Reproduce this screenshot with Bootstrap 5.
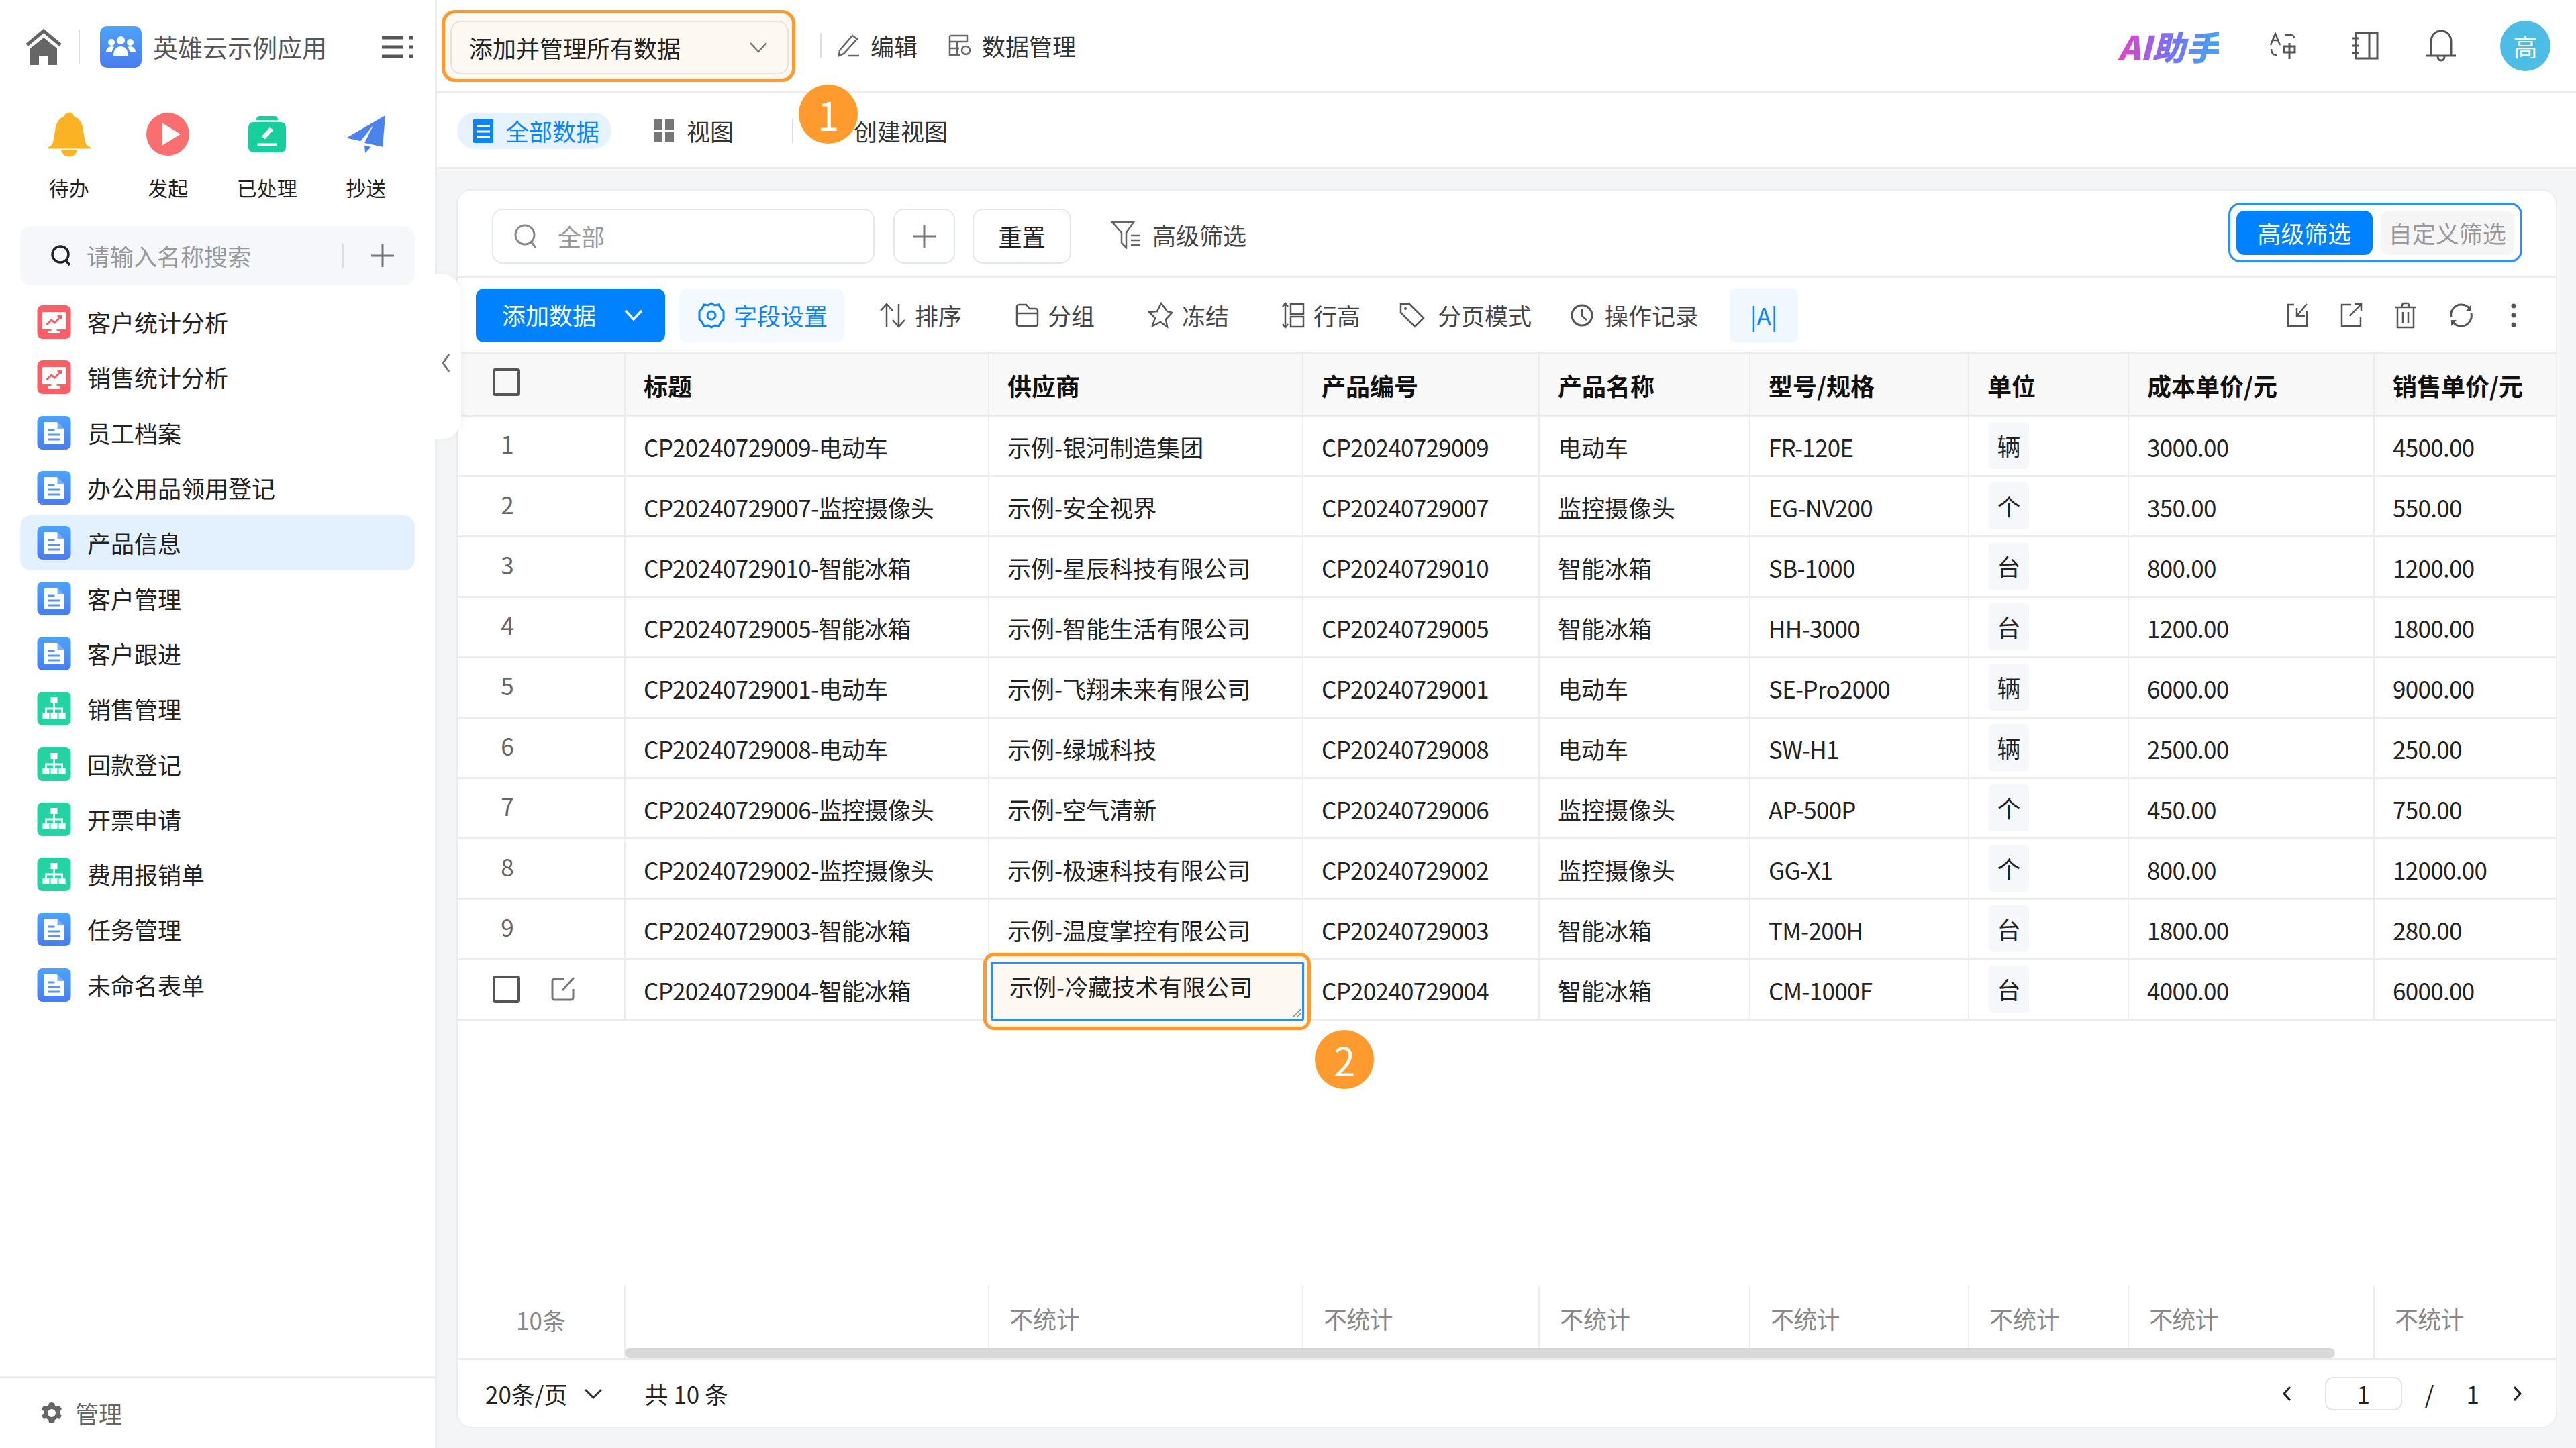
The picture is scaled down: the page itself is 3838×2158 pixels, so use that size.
<!DOCTYPE html>
<html lang="zh-CN">
  <head>
    <meta charset="UTF-8" />
    <meta name="viewport" content="width=device-width, initial-scale=1.0" />
    <title>产品信息</title>
    <link href="https://cdn.jsdelivr.net/npm/bootstrap@5.3.0/dist/css/bootstrap.min.css" rel="stylesheet" />
    <style>
      html,
      body {
        height: 100%;
        margin: 0;
        overflow: hidden;
      }
      body {
        font-family: "Noto Sans CJK SC", "Noto Sans", sans-serif;
        font-size: 35px;
        line-height: 46px;
        color: #222;
        background: #fff;
      }
      svg {
        flex: none;
        display: block;
      }

      /* sidebar */
      .side-col {
        width: 651px;
        flex: none;
        border-right: 3px solid #ececec;
        background: #fff;
      }
      .brand-bar {
        height: 140px;
        padding-left: 38px;
      }
      .brand-sep {
        width: 2px;
        height: 52px;
        background: #ddd;
        margin: 0 30px 0 25px;
      }
      .brand-name {
        font-size: 37px;
        color: #555;
        margin-left: 17px;
        width: 341px;
      }
      .quick-row {
        height: 177px;
        padding: 24px 24px 0 29px;
      }
      .quick-item {
        width: 147.5px;
        font-size: 30px;
        line-height: 40px;
        color: #222;
        text-align: center;
      }
      .quick-icon {
        height: 72px;
        margin-bottom: 23px;
      }
      .side-search {
        margin: 20px 30px 0;
        height: 88px;
        padding: 0 31px 0 45px;
        background: #f5f7fb;
        border-radius: 16px;
        color: #999;
      }
      .side-search span {
        margin-left: 22px;
        width: 384px;
      }
      .search-sep {
        width: 2px;
        height: 36px;
        background: #ddd;
        margin-right: 41px;
      }
      .side-list {
        margin: 14px 30px 0;
        --bs-list-group-bg: transparent;
        --bs-list-group-border-width: 0;
      }
      .side-item {
        height: 82.3px;
        padding: 0 0 0 25px;
        gap: 24px;
        color: #222;
        border-radius: 16px;
      }
      .side-item.is-current {
        background: #e3f1fe;
      }
      .side-foot {
        height: 107px;
        border-top: 3px solid #ececec;
        padding-left: 60px;
        gap: 18px;
        color: #666;
      }
      .collapse-tab {
        position: absolute;
        left: 640px;
        top: 408px;
        width: 47px;
        height: 247px;
        padding-top: 18px;
        background: #fff;
        border-radius: 0 30px 30px 0;
        box-shadow: 5px 0 8px rgba(0, 0, 0, 0.03);
        z-index: 5;
      }

      /* top bars */
      .main-col {
        min-width: 0;
      }
      .top-bar {
        height: 139px;
        border-bottom: 3px solid #ececec;
        padding: 0 38px 0 7px;
      }
      .hl-box {
        border: 5px solid #ff9a2e;
        border-radius: 20px;
        background: #fdf8f2;
        padding: 11px 5px 6px 8px;
      }
      .scope-select {
        width: 504px;
        height: 80px;
        border: 2px solid #e6e3df;
        border-radius: 16px;
        padding: 0 30px 0 26px;
      }
      .v-sep {
        width: 2px;
        height: 36px;
        background: #ddd;
      }
      .top-sep {
        margin-left: 37px;
      }
      .top-link {
        gap: 15px;
        color: #333;
      }
      .top-edit {
        margin-left: 24px;
      }
      .top-data {
        margin-left: 45px;
      }
      .ai-mark {
        font-size: 50px;
        font-weight: 900;
        font-style: italic;
        line-height: 56px;
        background: linear-gradient(100deg, #f03fc0, #7a6ff5 50%, #3fa8f5);
        -webkit-background-clip: text;
        background-clip: text;
        color: transparent;
      }
      .top-ic1 {
        margin-left: 75px;
      }
      .top-ic2 {
        margin-left: 83px;
      }
      .top-ic3 {
        margin-left: 70px;
      }
      .user-dot {
        width: 75px;
        height: 75px;
        margin-left: 65px;
        border-radius: 50%;
        background: #4dbde6;
        color: #fff;
        font-size: 36px;
      }
      .tab-bar {
        height: 113px;
        border-bottom: 3px solid #ececec;
        padding: 2px 0 0 30px;
      }
      .tab-pill {
        height: 54px;
        width: 230px;
        padding-left: 24px;
        gap: 18px;
        background: #e6f3ff;
        color: #0a84ff;
        border-radius: 27px;
      }
      .tab-plain {
        gap: 18px;
        color: #333;
      }
      .tab-view {
        margin-left: 62px;
      }
      .tab-sep {
        margin-left: 87px;
      }
      .tab-new {
        margin-left: 90px;
      }
      .num-dot {
        position: absolute;
        width: 88px;
        height: 88px;
        border-radius: 50%;
        background: #ff9a2e;
        color: #fff;
        font-size: 58px;
        line-height: 88px;
        text-align: center;
        z-index: 6;
      }
      .main-dot {
        left: 539px;
        top: 126px;
      }
      .cell-dot {
        left: 485px;
        top: 104px;
      }

      /* card */
      .page-area {
        background: #f4f5f7;
        padding: 30px 28px 30px 29px;
        min-height: 0;
      }
      .sheet {
        background: #fff;
        border: 2px solid #ececec;
        border-radius: 22px;
        min-height: 0;
        overflow: hidden;
      }
      .filter-row {
        height: 131px;
        flex: none;
        border-bottom: 3px solid #ececec;
        padding: 18px 50px 0 51px;
      }
      .ghost-box {
        height: 82px;
        margin-top: 9px;
        border: 2px solid #e3e6ec;
        border-radius: 16px;
        background: #fff;
      }
      .filter-input {
        width: 570px;
        padding-left: 30px;
        gap: 30px;
        color: #999;
      }
      .plus-box {
        width: 92px;
        margin-left: 28px;
      }
      .reset-box {
        width: 147px;
        margin-left: 26px;
      }
      .adv-link {
        margin: 25px 0 0 59px;
        gap: 16px;
        color: #444;
      }
      .filter-mode {
        width: 438px;
        height: 89px;
        border: 3px solid #2a90ff;
        border-radius: 18px;
        padding: 0 9px;
      }
      .btn.mode-on,
      .btn.mode-off {
        width: 203px;
        height: 66px;
        border: 0;
        border-radius: 12px;
        padding: 0;
        font-size: 35px;
        line-height: 66px;
      }
      .btn.mode-on {
        background: #0082ff;
        color: #fff;
      }
      .btn.mode-off {
        width: 200px;
        background: #f5f5f5;
        color: #999;
        margin-left: 12px;
      }
      .tool-row {
        height: 112px;
        flex: none;
        border-bottom: 3px solid #ececec;
        padding: 0 59px 0 27px;
      }
      .btn.add-btn {
        width: 282px;
        height: 80px;
        background: #0082ff;
        border: 0;
        border-radius: 12px;
        color: #fff;
        padding: 0 33px 0 39px;
        font-size: 35px;
      }
      .tool-on {
        width: 246px;
        height: 80px;
        margin-left: 21px;
        padding-left: 28px;
        gap: 13px;
        background: #f3f9ff;
        border-radius: 12px;
        color: #0a84ff;
      }
      .tool-item {
        gap: 13px;
        color: #444;
        margin-left: 79px;
      }
      .tool-first {
        margin-left: 52px;
      }
      .tool-page {
        margin-left: 57px;
        gap: 18px;
      }
      .tool-log {
        margin-left: 57px;
        gap: 16px;
      }
      .font-box {
        width: 102px;
        height: 80px;
        margin-left: 46px;
        background: #f0f7fe;
        border-radius: 8px;
        color: #0a84ff;
      }
      .tool-right {
        gap: 47px;
      }
      .tool-dots {
        margin-left: 8px;
      }

      /* table */
      .grid-wrap {
        min-height: 0;
      }
      .data-grid {
        width: 3126px;
        table-layout: fixed;
        margin: 0;
        border-collapse: collapse;
        --bs-table-bg: transparent;
        --bs-table-color: #222;
      }
      .data-grid col:nth-child(1) {
        width: 249px;
      }
      .data-grid col:nth-child(2) {
        width: 542px;
      }
      .data-grid col:nth-child(3) {
        width: 468px;
      }
      .data-grid col:nth-child(4) {
        width: 352px;
      }
      .data-grid col:nth-child(5) {
        width: 314px;
      }
      .data-grid col:nth-child(6) {
        width: 326px;
      }
      .data-grid col:nth-child(7) {
        width: 238px;
      }
      .data-grid col:nth-child(8) {
        width: 366px;
      }
      .data-grid col:nth-child(9) {
        width: 271px;
      }
      .data-grid > thead > tr > th {
        height: 92px;
        background: #f8f8f8;
        font-size: 36px;
        font-weight: 700;
        color: #111;
      }
      .data-grid > * > tr > * {
        height: 90px;
        padding: 3px 10px 0 27px;
        vertical-align: middle;
        border-bottom: 3px solid #ececec;
        border-right: 2px solid #ececec;
        white-space: nowrap;
      }
      .data-grid > * > tr > *:last-child {
        border-right: 0;
      }
      .data-grid > tbody > tr > td:nth-child(2),
      .data-grid > tbody > tr > td:nth-child(4),
      .data-grid > tbody > tr > td:nth-child(6),
      .data-grid > tbody > tr > td:nth-child(8),
      .data-grid > tbody > tr > td:nth-child(9) {
        letter-spacing: -0.7px;
      }
      .data-grid > * > tr > .idx-cell {
        padding: 0 100px 6px 0;
        text-align: center;
        color: #666;
      }
      .data-grid > thead > tr > .idx-cell {
        padding: 0 0 6px 52px;
      }
      .data-grid > tbody > tr > .act-cell {
        padding: 0 0 0 52px;
      }
      .data-grid > * > tr > .unit-cell {
        padding: 0 0 0 29px;
      }
      .act-gap {
        gap: 45px;
      }
      .tick-box {
        width: 41px;
        height: 41px;
        border: 4px solid #555;
        border-radius: 4px;
      }
      .unit-chip {
        width: 60px;
        height: 70px;
        background: #f5f7fb;
        border-radius: 6px;
      }
      .edit-cell {
        position: relative;
      }
      .edit-frame {
        position: absolute;
        left: -9px;
        top: -11px;
        width: 488px;
        height: 115px;
        border: 5px solid #ff9a2e;
        border-radius: 16px;
        background: #fdf8f2;
        z-index: 4;
      }
      .edit-box {
        position: absolute;
        left: 6px;
        top: 8px;
        width: 467px;
        height: 88px;
        border: 3px solid #2f8fee;
        border-radius: 3px;
        padding: 11px 0 0 25px;
      }
      .edit-grip {
        position: absolute;
        right: 1px;
        bottom: 1px;
      }
      .sum-wrap {
        position: relative;
        flex: none;
      }
      .data-grid.sum-grid > tbody > tr > * {
        height: 110px;
        padding: 0 0 10px 30px;
        color: #888;
        letter-spacing: 0;
        border-bottom: 3px solid #ececec;
      }
      .data-grid.sum-grid > tbody > tr > .idx-cell {
        padding: 0 0 6px;
      }
      .h-scroll {
        position: absolute;
        left: 249px;
        bottom: 3px;
        width: 2548px;
        height: 15px;
        background: #d8d8d8;
        border-radius: 8px;
      }
      .pager-row {
        height: 99px;
        flex: none;
        padding: 0 50px 0 41px;
      }
      .pager-total-label {
        margin-left: 39px;
      }
      .page-box {
        width: 115px;
        height: 50px;
        border: 2px solid #e0e3ea;
        border-radius: 12px;
        margin: 0 34px 0 50px;
      }
      .pager-total {
        margin-left: 48px;
      }
      .pager-next {
        margin-left: 50px;
      }
    </style>
  </head>
  <body class="d-flex position-relative">
    <svg width="0" height="0" class="position-absolute">
      <defs>
        <linearGradient id="blueFill" x1="0" y1="0" x2="0" y2="1">
          <stop offset="0" stop-color="#4ba3f9" />
          <stop offset="1" stop-color="#4a7df0" />
        </linearGradient>
        <symbol id="icDoc" viewBox="0 0 50 50">
          <rect width="50" height="50" rx="8" fill="url(#blueFill)" />
          <path d="M10 9h19l11 10v22H10z" fill="#fff" />
          <path d="M30 9v10h10z" fill="#7fb0f6" />
          <path d="M16 21h10M16 28h18M16 35h18" stroke="#5b93f3" stroke-width="3" />
        </symbol>
        <symbol id="icOrg" viewBox="0 0 50 50">
          <rect width="50" height="50" rx="8" fill="#25d2a2" />
          <path d="M20 8h10v9H20zM8 31h10v9H8zM20 31h10v9H20zM32 31h10v9H32z" fill="#fff" />
          <path d="M25 17v14M13 31v-6h24v6" fill="none" stroke="#fff" stroke-width="3" />
        </symbol>
        <symbol id="icChart" viewBox="0 0 50 50">
          <rect width="50" height="50" rx="8" fill="#fa5f68" />
          <path d="M9 10h32a2 2 0 0 1 2 2v22a2 2 0 0 1-2 2H29v3h5v3H16v-3h5v-3H9a2 2 0 0 1-2-2V12a2 2 0 0 1 2-2z" fill="#fff" />
          <path d="M14 29l7-7 5 4 9-9M30 16h5v5" fill="none" stroke="#fa5f68" stroke-width="3" />
        </symbol>
      </defs>
    </svg>

    <aside class="side-col d-flex flex-column">
      <div class="brand-bar d-flex align-items-center">
        <svg width="54" height="54" viewBox="0 0 54 54" aria-hidden="true">
          <path d="M2 24L27 3l25 21" fill="none" stroke="#666" stroke-width="5" />
          <path d="M7 29L27 13l20 16v25H34V40H20v14H7z" fill="#666" />
        </svg>
        <div class="brand-sep"></div>
        <svg width="62" height="62" viewBox="0 0 62 62" aria-hidden="true">
          <rect width="62" height="62" rx="10" fill="url(#blueFill)" />
          <g fill="#fff">
            <circle cx="31" cy="21" r="6" />
            <circle cx="17" cy="24" r="5" />
            <circle cx="45" cy="24" r="5" />
            <path d="M20 44c0-9 5-14 11-14s11 5 11 14zM9 39c0-6 4-9 8-9 2 0 3 .5 4 1-2 2-3 5-3 8zM53 39c0-6-4-9-8-9-2 0-3 .5-4 1 2 2 3 5 3 8z" />
          </g>
        </svg>
        <span class="brand-name">英雄云示例应用</span>
        <svg width="46" height="34" viewBox="0 0 46 34" aria-hidden="true">
          <path d="M0 3h32M0 17h32M0 31h32" stroke="#555" stroke-width="5" />
          <path d="M40 3h6M40 17h6M40 31h6" stroke="#555" stroke-width="5" />
        </svg>
      </div>
      <div class="quick-row d-flex align-items-start">
        <div class="quick-item d-flex flex-column align-items-center">
          <div class="quick-icon d-flex align-items-center">
            <svg width="64" height="67" viewBox="0 0 64 66" aria-hidden="true">
              <path d="M32 0c4 0 7 3 7 6 10 3 13 12 14 22l3 16c1 4 4 7 8 8v2H0v-2c4-1 7-4 8-8l3-16C12 18 15 9 25 6c0-3 3-6 7-6z" fill="#fbb324" />
              <path d="M20 56h24c-1 6-6 10-12 10s-11-4-12-10z" fill="#fbb324" />
            </svg>
          </div>
          <span>待办</span>
        </div>
        <div class="quick-item d-flex flex-column align-items-center">
          <div class="quick-icon d-flex align-items-center">
            <svg width="64" height="64" viewBox="0 0 64 64" aria-hidden="true">
              <circle cx="32" cy="32" r="32" fill="#fb6e70" />
              <path d="M23 15l28 17-28 17z" fill="#fff" />
            </svg>
          </div>
          <span>发起</span>
        </div>
        <div class="quick-item d-flex flex-column align-items-center">
          <div class="quick-icon d-flex align-items-center">
            <svg width="56" height="54" viewBox="0 0 58 60" preserveAspectRatio="none" aria-hidden="true">
              <path d="M12 7c0-4 3-7 5-7h24c2 0 5 3 5 7z" fill="#17cf9c" />
              <rect y="10" width="58" height="50" rx="8" fill="#17cf9c" />
              <path d="M36 21l-13 15" stroke="#fff" stroke-width="7" />
              <path d="M14 47h30" stroke="#fff" stroke-width="4" />
            </svg>
          </div>
          <span>已处理</span>
        </div>
        <div class="quick-item d-flex flex-column align-items-center">
          <div class="quick-icon d-flex align-items-center">
            <svg width="58" height="56" viewBox="0 0 60 60" preserveAspectRatio="none" aria-hidden="true">
              <path d="M60 0L0 36l22 5 20-26-14 29 28 6z" fill="#4a83ee" />
              <path d="M28 48l10 2-9 10z" fill="#4a83ee" />
            </svg>
          </div>
          <span>抄送</span>
        </div>
      </div>
      <div class="side-search d-flex align-items-center">
        <svg width="32" height="34" viewBox="0 0 32 34" aria-hidden="true">
          <circle cx="15" cy="15" r="12" fill="none" stroke="#222" stroke-width="3.5" />
          <path d="M23 24l6 7" stroke="#222" stroke-width="3.5" />
        </svg>
        <span>请输入名称搜索</span>
        <div class="search-sep"></div>
        <svg width="34" height="34" viewBox="0 0 34 34" aria-hidden="true">
          <path d="M17 0v34M0 17h34" stroke="#777" stroke-width="3" />
        </svg>
      </div>
      <div class="side-list list-group flex-grow-1">
        <div class="side-item list-group-item d-flex align-items-center"><svg width="51" height="50"><use href="#icChart" /></svg>客户统计分析</div>
        <div class="side-item list-group-item d-flex align-items-center"><svg width="51" height="50"><use href="#icChart" /></svg>销售统计分析</div>
        <div class="side-item list-group-item d-flex align-items-center"><svg width="51" height="50"><use href="#icDoc" /></svg>员工档案</div>
        <div class="side-item list-group-item d-flex align-items-center"><svg width="51" height="50"><use href="#icDoc" /></svg>办公用品领用登记</div>
        <div class="side-item list-group-item is-current d-flex align-items-center"><svg width="51" height="50"><use href="#icDoc" /></svg>产品信息</div>
        <div class="side-item list-group-item d-flex align-items-center"><svg width="51" height="50"><use href="#icDoc" /></svg>客户管理</div>
        <div class="side-item list-group-item d-flex align-items-center"><svg width="51" height="50"><use href="#icDoc" /></svg>客户跟进</div>
        <div class="side-item list-group-item d-flex align-items-center"><svg width="51" height="50"><use href="#icOrg" /></svg>销售管理</div>
        <div class="side-item list-group-item d-flex align-items-center"><svg width="51" height="50"><use href="#icOrg" /></svg>回款登记</div>
        <div class="side-item list-group-item d-flex align-items-center"><svg width="51" height="50"><use href="#icOrg" /></svg>开票申请</div>
        <div class="side-item list-group-item d-flex align-items-center"><svg width="51" height="50"><use href="#icOrg" /></svg>费用报销单</div>
        <div class="side-item list-group-item d-flex align-items-center"><svg width="51" height="50"><use href="#icDoc" /></svg>任务管理</div>
        <div class="side-item list-group-item d-flex align-items-center"><svg width="51" height="50"><use href="#icDoc" /></svg>未命名表单</div>
      </div>
      <div class="side-foot d-flex align-items-center">
        <svg width="34" height="34" viewBox="0 0 34 34" aria-hidden="true">
          <path d="M17 1l4 1 1 4 3 1 4-1 3 5-3 3v4l3 3-3 5-4-1-3 2-1 4h-8l-1-4-3-2-4 1-3-5 3-3v-4L2 11l3-5 4 1 3-1 1-4z" fill="#666" />
          <circle cx="17" cy="17" r="6" fill="#fff" />
        </svg>
        <span>管理</span>
      </div>
    </aside>
    <div class="collapse-tab d-flex align-items-center justify-content-end">
      <svg class="me-3" width="14" height="30" viewBox="0 0 14 30" aria-hidden="true">
        <path d="M12 2L3 15l9 13" fill="none" stroke="#777" stroke-width="3" />
      </svg>
    </div>

    <div class="main-col flex-grow-1 d-flex flex-column position-relative">
      <div class="num-dot main-dot">1</div>
      <header class="top-bar d-flex align-items-center flex-shrink-0">
        <div class="hl-box">
          <div class="scope-select d-flex align-items-center justify-content-between">
            <span>添加并管理所有数据</span>
            <svg width="26" height="16" viewBox="0 0 26 16" aria-hidden="true">
              <path d="M1 1l12 13L25 1" fill="none" stroke="#777" stroke-width="2.5" />
            </svg>
          </div>
        </div>
        <div class="v-sep top-sep"></div>
        <div class="top-link d-flex align-items-center top-edit">
          <svg width="34" height="34" viewBox="0 0 34 34" aria-hidden="true">
            <path d="M22 2l7 5L9 29l-7 3 1-8zM16 32h16" fill="none" stroke="#666" stroke-width="2.5" />
          </svg>
          <span>编辑</span>
        </div>
        <div class="top-link d-flex align-items-center top-data">
          <svg width="36" height="34" viewBox="0 0 36 34" aria-hidden="true">
            <path d="M3 2h26v10M3 2v29h15M3 11h26M3 21h14M14 11v20" fill="none" stroke="#666" stroke-width="2.5" />
            <circle cx="27" cy="24" r="6" fill="none" stroke="#666" stroke-width="2.5" />
          </svg>
          <span>数据管理</span>
        </div>
        <div class="ai-mark ms-auto">AI助手</div>
        <svg class="top-ic1" width="40" height="40" viewBox="0 0 40 40" aria-hidden="true">
          <path d="M2 19l7-17 7 17M5 12h8" fill="none" stroke="#555" stroke-width="2.5" />
          <path d="M24 4h8c3 0 5 2 5 5M3 25c0 6 3 9 8 9" fill="none" stroke="#555" stroke-width="2.5" />
          <path d="M22 21h16v9H22zM30 16v24" fill="none" stroke="#555" stroke-width="3" />
        </svg>
        <svg class="top-ic2" width="40" height="42" viewBox="0 0 40 42" aria-hidden="true">
          <path d="M6 2h32v38H6zM26 2v38M1 10h9M1 21h9M1 32h9" fill="none" stroke="#555" stroke-width="3" />
        </svg>
        <svg class="top-ic3" width="46" height="48" viewBox="0 0 46 48" aria-hidden="true">
          <path d="M1 39h44M8 39V18C8 9 14 2 23 2s15 7 15 16v21M18 40c0 4 2 6 5 6s5-2 5-6" fill="none" stroke="#555" stroke-width="3" />
        </svg>
        <div class="user-dot d-flex align-items-center justify-content-center">高</div>
      </header>
      <nav class="tab-bar d-flex align-items-center flex-shrink-0">
        <div class="tab-pill d-flex align-items-center">
          <svg width="30" height="36" viewBox="0 0 30 36" aria-hidden="true">
            <path d="M2 0h26a2 2 0 0 1 2 2v32a2 2 0 0 1-2 2H2a2 2 0 0 1-2-2V2a2 2 0 0 1 2-2z" fill="#0a84ff" />
            <path d="M5 11h20M5 19h20M5 27h20" stroke="#fff" stroke-width="3" />
          </svg>
          <span>全部数据</span>
        </div>
        <div class="tab-plain d-flex align-items-center tab-view">
          <svg width="32" height="34" viewBox="0 0 32 34" aria-hidden="true">
            <path d="M1 0h13v15H1zM18 0h13v15H18zM1 19h13v15H1zM18 19h13v15H18z" fill="#777" />
          </svg>
          <span>视图</span>
        </div>
        <div class="v-sep tab-sep"></div>
        <div class="tab-plain tab-new">创建视图</div>
      </nav>

      <main class="page-area flex-grow-1 d-flex flex-column">
        <section class="sheet flex-grow-1 d-flex flex-column">
          <div class="filter-row d-flex align-items-start">
            <div class="ghost-box filter-input d-flex align-items-center">
              <svg width="36" height="38" viewBox="0 0 36 38" aria-hidden="true">
                <circle cx="17" cy="17" r="14" fill="none" stroke="#888" stroke-width="3" />
                <path d="M27 28l6 8" stroke="#888" stroke-width="3" />
              </svg>
              <span>全部</span>
            </div>
            <div class="ghost-box d-flex align-items-center justify-content-center plus-box">
              <svg width="34" height="34" viewBox="0 0 34 34" aria-hidden="true">
                <path d="M17 0v34M0 17h34" stroke="#777" stroke-width="3" />
              </svg>
            </div>
            <div class="ghost-box d-flex align-items-center justify-content-center reset-box">重置</div>
            <div class="d-flex align-items-center adv-link">
              <svg width="46" height="42" viewBox="0 0 46 42" aria-hidden="true">
                <path d="M2 2h32L23 18v22l-7-7V18zM30 22h14M30 29h14M30 36h14" fill="none" stroke="#666" stroke-width="2.5" />
              </svg>
              <span>高级筛选</span>
            </div>
            <div class="filter-mode d-flex align-items-center ms-auto">
              <button type="button" class="btn mode-on">高级筛选</button>
              <button type="button" class="btn mode-off">自定义筛选</button>
            </div>
          </div>

          <div class="tool-row d-flex align-items-center">
            <button type="button" class="btn add-btn d-flex align-items-center justify-content-between">
              <span>添加数据</span>
              <svg width="28" height="18" viewBox="0 0 28 18" aria-hidden="true">
                <path d="M2 2l12 13L26 2" fill="none" stroke="#fff" stroke-width="3.5" />
              </svg>
            </button>
            <div class="tool-on d-flex align-items-center">
              <svg width="40" height="40" viewBox="0 0 40 40" aria-hidden="true">
                <path d="M20 2l5 3 6-1 3 6 4 4v12l-4 4-3 6-6-1-5 3-5-3-6 1-3-6-4-4V14l4-4 3-6 6 1z" fill="none" stroke="#0a84ff" stroke-width="3" />
                <circle cx="20" cy="20" r="6" fill="none" stroke="#0a84ff" stroke-width="3" />
              </svg>
              <span>字段设置</span>
            </div>
            <div class="tool-item tool-first d-flex align-items-center">
              <svg width="40" height="38" viewBox="0 0 40 38" aria-hidden="true">
                <path d="M11 36V2M2 12L11 2l9 10M29 2v34M20 26l9 10 9-10" fill="none" stroke="#555" stroke-width="2.5" />
              </svg>
              <span>排序</span>
            </div>
            <div class="tool-item d-flex align-items-center">
              <svg width="36" height="36" viewBox="0 0 36 36" aria-hidden="true">
                <path d="M3 5a3 3 0 0 1 3-3h11l5 6h9a3 3 0 0 1 3 3v20a3 3 0 0 1-3 3H6a3 3 0 0 1-3-3zM3 15h31" fill="none" stroke="#555" stroke-width="2.5" />
              </svg>
              <span>分组</span>
            </div>
            <div class="tool-item d-flex align-items-center">
              <svg width="38" height="40" viewBox="0 0 38 40" aria-hidden="true">
                <path d="M20 2l9 12 7 2-9 10 2 11-10-7-12 6 4-12-9-9 12-1z" fill="none" stroke="#555" stroke-width="2.5" />
              </svg>
              <span>冻结</span>
            </div>
            <div class="tool-item d-flex align-items-center">
              <svg width="34" height="40" viewBox="0 0 34 40" aria-hidden="true">
                <path d="M5 1v38M1 7l4-5 4 5M1 33l4 5 4-5M13 3h19v15H13zM13 22h19v15H13z" fill="none" stroke="#555" stroke-width="2.5" />
              </svg>
              <span>行高</span>
            </div>
            <div class="tool-item tool-page d-flex align-items-center">
              <svg width="40" height="40" viewBox="0 0 40 40" aria-hidden="true">
                <path d="M3 3h13l21 21-13 13L3 16z" fill="none" stroke="#555" stroke-width="2.5" />
                <circle cx="10" cy="10" r="2" fill="#555" />
              </svg>
              <span>分页模式</span>
            </div>
            <div class="tool-item tool-log d-flex align-items-center">
              <svg width="36" height="36" viewBox="0 0 36 36" aria-hidden="true">
                <circle cx="18" cy="18" r="15" fill="none" stroke="#555" stroke-width="3" />
                <path d="M18 8v11l7 6" fill="none" stroke="#555" stroke-width="2.5" />
              </svg>
              <span>操作记录</span>
            </div>
            <div class="font-box d-flex align-items-center justify-content-center">|A|</div>
            <div class="tool-right d-flex align-items-center ms-auto">
              <svg width="33" height="38" viewBox="0 0 33 38" aria-hidden="true">
                <path d="M11 3H2v32h28V12M30 2L15 20M15 8v12h12" fill="none" stroke="#555" stroke-width="2.5" />
              </svg>
              <svg width="33" height="38" viewBox="0 0 33 38" aria-hidden="true">
                <path d="M16 3H2v32h28V22M14 20L31 2M21 2h10v10" fill="none" stroke="#555" stroke-width="2.5" />
              </svg>
              <svg width="34" height="40" viewBox="0 0 34 40" aria-hidden="true">
                <path d="M1 8h32M5 8v30h24V8M11 8l2-6h8l2 6M13 15v16M21 15v16" fill="none" stroke="#555" stroke-width="2.5" />
              </svg>
              <svg width="38" height="38" viewBox="0 0 38 38" aria-hidden="true">
                <path d="M4 22C2 11 10 3 19 3c5 0 10 2 13 7M34 16c2 11-6 19-15 19-5 0-10-2-13-7" fill="none" stroke="#555" stroke-width="3" />
                <path d="M34 3v9h-8M4 35v-9h8" fill="#555" />
              </svg>
              <svg class="tool-dots" width="8" height="36" viewBox="0 0 8 36" aria-hidden="true">
                <circle cx="4" cy="4" r="3.5" fill="#555" />
                <circle cx="4" cy="18" r="3.5" fill="#555" />
                <circle cx="4" cy="32" r="3.5" fill="#555" />
              </svg>
            </div>
          </div>

          <div class="grid-wrap flex-grow-1">
            <table class="table data-grid">
              <colgroup>
                <col /><col /><col /><col /><col /><col /><col /><col /><col />
              </colgroup>
              <thead>
                <tr>
                  <th class="idx-cell"><div class="tick-box"></div></th>
                  <th>标题</th><th>供应商</th><th>产品编号</th><th>产品名称</th><th>型号/规格</th><th>单位</th><th>成本单价/元</th><th>销售单价/元</th>
                </tr>
              </thead>
              <tbody>
                <tr><td class="idx-cell">1</td><td>CP20240729009-电动车</td><td>示例-银河制造集团</td><td>CP20240729009</td><td>电动车</td><td>FR-120E</td><td class="unit-cell"><div class="unit-chip d-flex align-items-center justify-content-center">辆</div></td><td>3000.00</td><td>4500.00</td></tr>
                <tr><td class="idx-cell">2</td><td>CP20240729007-监控摄像头</td><td>示例-安全视界</td><td>CP20240729007</td><td>监控摄像头</td><td>EG-NV200</td><td class="unit-cell"><div class="unit-chip d-flex align-items-center justify-content-center">个</div></td><td>350.00</td><td>550.00</td></tr>
                <tr><td class="idx-cell">3</td><td>CP20240729010-智能冰箱</td><td>示例-星辰科技有限公司</td><td>CP20240729010</td><td>智能冰箱</td><td>SB-1000</td><td class="unit-cell"><div class="unit-chip d-flex align-items-center justify-content-center">台</div></td><td>800.00</td><td>1200.00</td></tr>
                <tr><td class="idx-cell">4</td><td>CP20240729005-智能冰箱</td><td>示例-智能生活有限公司</td><td>CP20240729005</td><td>智能冰箱</td><td>HH-3000</td><td class="unit-cell"><div class="unit-chip d-flex align-items-center justify-content-center">台</div></td><td>1200.00</td><td>1800.00</td></tr>
                <tr><td class="idx-cell">5</td><td>CP20240729001-电动车</td><td>示例-飞翔未来有限公司</td><td>CP20240729001</td><td>电动车</td><td>SE-Pro2000</td><td class="unit-cell"><div class="unit-chip d-flex align-items-center justify-content-center">辆</div></td><td>6000.00</td><td>9000.00</td></tr>
                <tr><td class="idx-cell">6</td><td>CP20240729008-电动车</td><td>示例-绿城科技</td><td>CP20240729008</td><td>电动车</td><td>SW-H1</td><td class="unit-cell"><div class="unit-chip d-flex align-items-center justify-content-center">辆</div></td><td>2500.00</td><td>250.00</td></tr>
                <tr><td class="idx-cell">7</td><td>CP20240729006-监控摄像头</td><td>示例-空气清新</td><td>CP20240729006</td><td>监控摄像头</td><td>AP-500P</td><td class="unit-cell"><div class="unit-chip d-flex align-items-center justify-content-center">个</div></td><td>450.00</td><td>750.00</td></tr>
                <tr><td class="idx-cell">8</td><td>CP20240729002-监控摄像头</td><td>示例-极速科技有限公司</td><td>CP20240729002</td><td>监控摄像头</td><td>GG-X1</td><td class="unit-cell"><div class="unit-chip d-flex align-items-center justify-content-center">个</div></td><td>800.00</td><td>12000.00</td></tr>
                <tr><td class="idx-cell">9</td><td>CP20240729003-智能冰箱</td><td>示例-温度掌控有限公司</td><td>CP20240729003</td><td>智能冰箱</td><td>TM-200H</td><td class="unit-cell"><div class="unit-chip d-flex align-items-center justify-content-center">台</div></td><td>1800.00</td><td>280.00</td></tr>
                <tr>
                  <td class="act-cell">
                    <div class="d-flex align-items-center act-gap">
                      <div class="tick-box"></div>
                      <svg width="38" height="38" viewBox="0 0 38 38" aria-hidden="true">
                        <path d="M20 4H6a3 3 0 0 0-3 3v25a3 3 0 0 0 3 3h25a3 3 0 0 0 3-3V19M18 21L35 2" fill="none" stroke="#777" stroke-width="3" />
                      </svg>
                    </div>
                  </td>
                  <td>CP20240729004-智能冰箱</td>
                  <td class="edit-cell">
                    <div class="edit-frame">
                      <div class="edit-box">
                        示例-冷藏技术有限公司
                        <svg class="edit-grip" width="14" height="14" viewBox="0 0 14 14" aria-hidden="true">
                          <path d="M1 13L13 1M7 13l6-6" stroke="#888" stroke-width="1.5" />
                        </svg>
                      </div>
                    </div>
                    <div class="num-dot cell-dot">2</div>
                  </td>
                  <td>CP20240729004</td><td>智能冰箱</td><td>CM-1000F</td><td class="unit-cell"><div class="unit-chip d-flex align-items-center justify-content-center">台</div></td><td>4000.00</td><td>6000.00</td>
                </tr>
              </tbody>
            </table>
          </div>

          <div class="sum-wrap">
            <table class="table data-grid sum-grid">
              <colgroup>
                <col /><col /><col /><col /><col /><col /><col /><col /><col />
              </colgroup>
              <tbody>
                <tr><td class="idx-cell">10条</td><td></td><td>不统计</td><td>不统计</td><td>不统计</td><td>不统计</td><td>不统计</td><td>不统计</td><td>不统计</td></tr>
              </tbody>
            </table>
            <div class="h-scroll"></div>
          </div>

          <div class="pager-row d-flex align-items-center">
            <span>20条/页</span>
            <svg class="mx-4" width="28" height="16" viewBox="0 0 28 16" aria-hidden="true">
              <path d="M2 2l12 12L26 2" fill="none" stroke="#333" stroke-width="3" />
            </svg>
            <span class="pager-total-label">共 10 条</span>
            <svg class="ms-auto" width="14" height="24" viewBox="0 0 14 24" aria-hidden="true">
              <path d="M12 2L3 12l9 10" fill="none" stroke="#222" stroke-width="3" />
            </svg>
            <div class="page-box d-flex align-items-center justify-content-center">1</div>
            <span>/</span>
            <span class="pager-total">1</span>
            <svg class="pager-next" width="14" height="24" viewBox="0 0 14 24" aria-hidden="true">
              <path d="M2 2l9 10-9 10" fill="none" stroke="#222" stroke-width="3" />
            </svg>
          </div>
        </section>
      </main>
    </div>
  </body>
</html>
